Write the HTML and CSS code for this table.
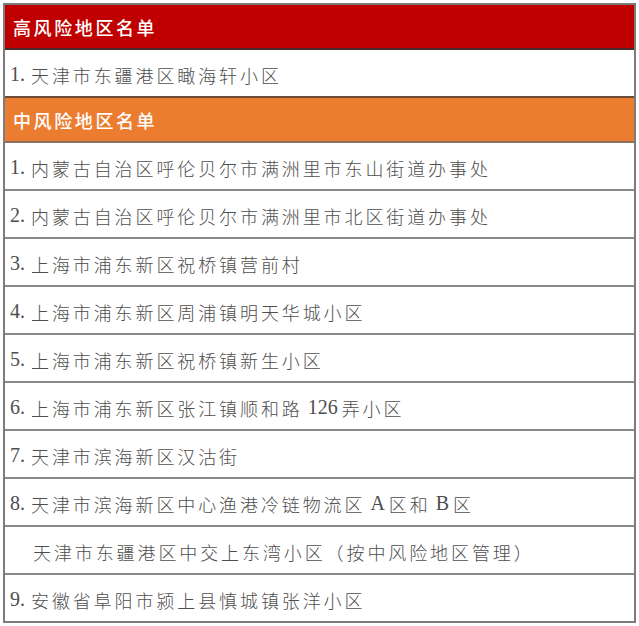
FILE: index.html
```html
<!DOCTYPE html>
<html lang="zh-CN">
<head>
<meta charset="utf-8">
<title>风险地区名单</title>
<link rel="stylesheet" href="styles.css">
</head>
<body>
<div class="table">
  <div class="row head high">高风险地区名单</div>
  <div class="row"><span class="num">1.</span>天津市东疆港区瞰海轩小区</div>
  <div class="row head mid">中风险地区名单</div>
  <div class="row"><span class="num">1.</span>内蒙古自治区呼伦贝尔市满洲里市东山街道办事处</div>
  <div class="row"><span class="num">2.</span>内蒙古自治区呼伦贝尔市满洲里市北区街道办事处</div>
  <div class="row"><span class="num">3.</span>上海市浦东新区祝桥镇营前村</div>
  <div class="row"><span class="num">4.</span>上海市浦东新区周浦镇明天华城小区</div>
  <div class="row"><span class="num">5.</span>上海市浦东新区祝桥镇新生小区</div>
  <div class="row"><span class="num">6.</span>上海市浦东新区张江镇顺和路<span class="lat">126</span>弄小区</div>
  <div class="row"><span class="num">7.</span>天津市滨海新区汉沽街</div>
  <div class="row"><span class="num">8.</span>天津市滨海新区中心渔港冷链物流区<span class="lat">A</span>区和<span class="lat">B</span>区</div>
  <div class="row sub">天津市东疆港区中交上东湾小区（按中风险地区管理）</div>
  <div class="row"><span class="num">9.</span>安徽省阜阳市颍上县慎城镇张洋小区</div>
</div>
</body>
</html>
```
FILE: styles.css
```css
html, body {
  margin: 0;
  padding: 0;
  background: #ffffff;
}
body {
  padding: 3px;
  width: 633px;
}
.table {
  width: 633px;
  height: 620px;
  box-sizing: border-box;
  border: 2px solid #7c7c7c;
  display: flex;
  flex-direction: column;
}
.row {
  flex: 1 1 0;
  display: flex;
  align-items: center;
  padding: 3px 0 0 5px;
  box-sizing: border-box;
  border-top: 2px solid #8a8a8a;
  font-family: "Noto Sans CJK SC", sans-serif;
  font-weight: 300;
  font-size: 18px;
  letter-spacing: 2.9px;
  color: #4e4e4e;
  white-space: nowrap;
}
.row:first-child {
  border-top: none;
}
.num {
  font-family: "Liberation Serif", serif;
  font-weight: 400;
  font-size: 20px;
  letter-spacing: 0;
  margin-right: 6px;
}
.lat {
  font-family: "Liberation Serif", serif;
  font-weight: 400;
  font-size: 20px;
  letter-spacing: 0;
  margin: 0 4px 0 5px;
}
.head {
  font-weight: 500;
  font-size: 18px;
  letter-spacing: 2.6px;
  color: #ffffff;
  padding-left: 8px;
  padding-top: 0;
}
.high {
  background: #c00000;
}
.mid {
  background: #ec7d30;
  border-top-color: #6b4a36;
}
.high + .row {
  border-top-color: #4a2a2a;
}
.mid + .row {
  border-top-color: #8a7060;
}
.sub {
  padding-left: 28px;
}
```
